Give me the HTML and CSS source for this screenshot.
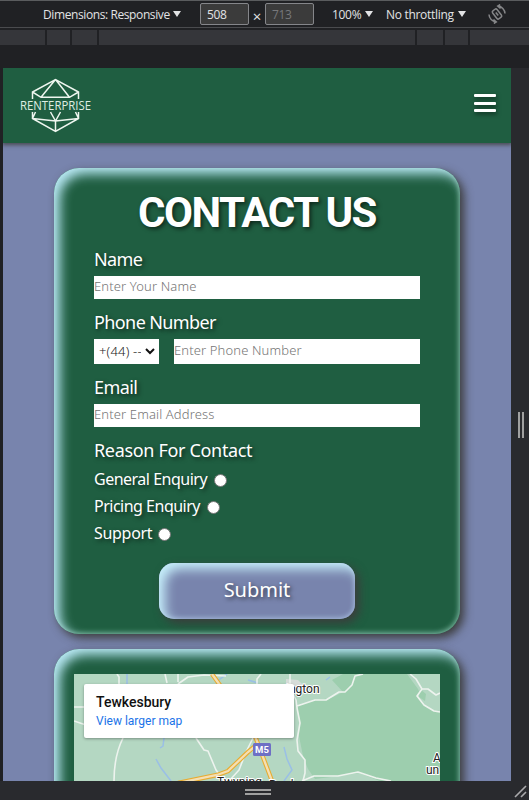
FILE: index.html
```
<!DOCTYPE html>
<html lang="en">
<head>
<meta charset="utf-8">
<title>Contact Us</title>
<link rel="stylesheet" href="styles.css">
</head>
<body>
<div class="toolbar">
  <span class="tool dims">Dimensions: Responsive</span><i class="caret"></i>
  <span class="size">508</span><span class="times">×</span><span class="size muted">713</span>
  <span class="tool zoom">100%</span><i class="caret"></i>
  <span class="tool throttle">No throttling</span><i class="caret"></i>
  <svg class="rotate" width="20" height="20" viewBox="0 0 20 20" fill="none" stroke="#858688" stroke-width="1.5"><g transform="rotate(-38 10 10)"><rect x="7.200" y="5" width="5.600" height="10" rx="1.500"/><path d="M10 8v4"/></g><path d="M2 10.500A8 8 0 0 0 9 18M6.500 15.500l2.800 2.500-2.500 1.500M18 9.500A8 8 0 0 0 11 2M13.500 4.500L10.700 2l2.500-1.500"/></svg>
</div>
<div class="ruler"><i></i><i></i><i></i><i></i><i></i><i></i><i></i></div>
<div class="stage">
  <main class="page">
    <header class="header">
      <svg class="logo" width="74" height="58" viewBox="19 77 74 58" fill="none" stroke="#eef6ef" stroke-width="1.500"><path d="M32.500 99V92L55.500 79.500 78.500 92V99M32.500 92L41 97.300H69.500L78.500 92M55.500 79.500L41 97.300M55.500 79.500L69.500 97.300M32.500 112V118.500L55.500 131.500 78.500 118.500V112M32.500 118.500L55.500 121 78.500 118.500M55.500 121V131.500M50.500 112L55.500 121 60.500 112M35.500 112L32.500 118.500M75.500 112L78.500 118.500"/><text class="logo-text" x="20" y="109.800" textLength="71" lengthAdjust="spacingAndGlyphs">RENTERPRISE</text></svg>
      <div class="burger"><i></i><i></i><i></i></div>
    </header>
    <form class="card contact">
      <h1>CONTACT US</h1>
      <label class="name">Name</label>
      <input class="field f-name" type="text" placeholder="Enter Your Name">
      <label class="phone">Phone Number</label>
      <div class="phone-row">
        <div class="select"><span>+(44) --</span><svg width="10" height="7" viewBox="0 0 10 7" fill="none" stroke="#111" stroke-width="2"><path d="M1 1l4 4 4-4"/></svg></div>
        <input class="field f-phone" type="text" placeholder="Enter Phone Number">
      </div>
      <label class="email">Email</label>
      <input class="field f-email" type="text" placeholder="Enter Email Address">
      <label class="reason">Reason For Contact</label>
      <div class="options">
        <div class="option"><span class="o1">General Enquiry</span><i></i></div>
        <div class="option"><span class="o2">Pricing Enquiry</span><i></i></div>
        <div class="option"><span class="o3">Support</span><i></i></div>
      </div>
      <button class="submit" type="button">Submit</button>
    </form>
    <section class="card location">
      <div class="map">
        <svg width="366" height="107" viewBox="0 0 366 107" fill="none">
          <rect width="366" height="107" fill="#b4d7c2"/>
          <path fill="#9dceae" d="M223 32L242 26 257 24 269 18 258 6 269 0H333L344 15 349 26 366 38V107H306L285 99 265 102 241 105 234 95 229 82 225 62 226 47z"/>
          <path fill="#b4d7c2" d="M336 0l6 5 6 10-5 7 7 9 10 6 6 1V0z"/>
          <path fill="#d6dcd9" d="M212 5l12 1 6 6-3 7h-15z"/>
          <path fill="#9dceae" d="M346 15l6 5-1 7-6-4z"/>
          <path stroke="#9abfe6" stroke-width="1.500" d="M53 0v10M153 0l-11 8M174 6l10 3M90 64l-1 8-3 2M82 85l5 9 10 13M210 73l3 12 5 11-8 11M252 6l4-3"/>
          <g stroke="#edf3ee" stroke-width="1.600" stroke-linejoin="round"><path d="M43 0l2 3v9M91 0l2 9M104 10l10-7 16-2 22 1M104 0v8M187 0l-4 5v6M0 33h12M0 47l12 4M49 64q-9 18-9 43M122 64l8 12 4 1 8 19 8 11M179 64l-7 14-7 18-10 11M216 0v14l6 12 1 8 3 15-3 17 1 11 7 9v13l-2 8M223 32l18-6h11l13-8h6l7-7 3-9 8-2M336 0l6 5 6 10-5 7 7 9 10 6 6 1M348 15l6 0 8 6 4-2M228 107l12-5h24l20-4 18 6 15 3"/></g>
          <g stroke="#e7ac32" stroke-width="4.500"><path d="M138 0l15 21M104 109l39-8 11-4 20-19 11-9M181 62l17 45"/></g>
          <g stroke="#f4dfb3" stroke-width="2.300"><path d="M138 0l15 21M104 109l39-8 11-4 20-19 11-9M181 62l17 45"/></g>
          <rect x="179" y="69" width="18" height="13" rx="1.500" fill="#6e70c5"/>
          <text class="road" x="181" y="78.500" textLength="14">M5</text>
          <g class="places"><text x="212" y="19">ington</text><text x="143" y="112" textLength="45">Twyning</text><text x="359" y="88">A</text><text x="352" y="100">un</text><text x="195" y="115">Bredon</text></g>
        </svg>
        <div class="place"><b>Tewkesbury</b><a>View larger map</a></div>
      </div>
    </section>
  </main>
  <div class="side"><div class="grip"></div></div>
</div>
<div class="bottom"><div class="grip flat"></div><svg class="corner" width="14" height="14" viewBox="0 0 14 14" stroke="#a9a9ab" stroke-width="1.600"><path d="M1 12L12 1M7 12l5-5"/></svg></div>
</body>
</html>
```
FILE: styles.css
```
* { box-sizing: border-box; }
body { margin: 0; width: 529px; height: 800px; overflow: hidden; background: #202124; font-family: "Noto Sans", sans-serif; }
.toolbar { height: 28px; border-top: 1px solid #5a5c5e; border-bottom: 1px solid #4a4b4e; display: flex; align-items: center; padding-left: 43px; color: #e2e3e5; font: 12px "Open Sans", sans-serif; white-space: nowrap; }
.tool { line-height: 18px; padding-top: 2px; }
.dims { width: 127px; letter-spacing: -0.4px; }
.caret { border: 4px solid transparent; border-top: 6px solid #e2e3e5; border-bottom: 0; margin-left: 3px; }
.size { width: 49px; height: 22px; margin-left: 19px; border: 1px solid #85868a; border-radius: 2px; background: #3b3b3b; line-height: 21px; padding-left: 6px; letter-spacing: -0.4px; }
.times { width: 16px; text-align: center; font-size: 15px; padding-top: 3px; }
.times + .size { margin-left: 0; }
.muted { color: #77787b; }
.zoom { width: 30px; margin-left: 18px; letter-spacing: -0.3px; }
.throttle { width: 69px; margin-left: 13px; letter-spacing: -0.3px; }
.rotate { margin-left: 21px; }
.ruler { height: 18px; padding: 2px 0 1px; display: grid; grid-template-columns: 45px 23px 25px 316px 26px 23px 59px; gap: 2px; }
.ruler i { background: #35363a; }
.stage { margin-top: 22px; padding-left: 3px; height: 713px; display: grid; grid-template-columns: 508px 18px; }
.page { background: #7884ad; height: 713px; overflow: hidden; }
.header { height: 75px; background: #1f5e41; box-shadow: 0 1px 4px 1px #484a50; display: flex; justify-content: space-between; padding: 9px 15px 0 16px; }
.logo { overflow: visible; }
.logo-text { font: 400 12.5px "Open Sans", sans-serif; fill: #dfeee3; stroke: none; }
.burger { width: 22px; height: 18px; margin-top: 17px; display: flex; flex-direction: column; justify-content: space-between; filter: drop-shadow(1px 2px 2px #0008); }
.burger i { height: 3px; border-radius: 1px; background: #fff; }
.card { width: 406px; margin-left: 51px; border-radius: 25px; background: #1f5e41; box-shadow: 4px 4px 10px #3c3c3c, inset 6px 6px 12px #b8e8f4, inset -1px -1px 5px #6fac91; }
.contact { height: 466px; margin-top: 25px; padding: 20px 40px 15px; display: flex; flex-direction: column; color: #fff; }
h1 { margin: 0 0 12px; height: 48px; font: 700 42px/49px Roboto, sans-serif; letter-spacing: -1.5px; text-align: center; text-shadow: 2px 2px 4px #0009; white-space: nowrap; }
label { height: 24px; line-height: 22px; font-size: 18px; letter-spacing: -0.6px; margin-bottom: 4px; text-shadow: 2px 2px 4px #0009; white-space: nowrap; }
.reason { letter-spacing: -0.33px; }
.field { display: block; border: 0; border-radius: 0; height: 23px; flex: none; width: 326px; margin: 0 0 12px; padding: 0 0 3px 0; font: 300 13px "Noto Sans", sans-serif; letter-spacing: 0.13px; background: #fff; }
.field::placeholder { color: #757575; opacity: 1; }
.phone-row { display: flex; justify-content: space-between; height: 37px; }
.f-phone { width: 246px; height: 25px; }
.select { width: 65px; height: 25px; background: #fff; color: #222; font: 300 13px/22px "Noto Sans", sans-serif; display: flex; align-items: center; padding: 0 4px 0 5px; }
.select span { width: 42px; height: 24px; letter-spacing: 0.2px; margin-right: 4px; overflow: hidden; white-space: nowrap; }
.options { margin-top: -1px; }
.option { height: 27px; display: flex; align-items: center; font-size: 16px; letter-spacing: -0.5px; text-shadow: 2px 2px 4px #0009; white-space: nowrap; }
.option span { padding-bottom: 2px; }
.option i { width: 13px; height: 13px; border: 1px solid #767676; border-radius: 50%; background: #fff; margin: 2px 0 0 5px; }
.o1 { width: 115px; } .o2 { width: 108px; } .o3 { width: 59px; letter-spacing: -0.3px; }
.submit { flex: none; width: 196px; height: 56px; margin: 16px 0 0 65px; padding: 0 0 3px; border: 0; border-radius: 15px; background: #7884ad; color: #fff; font: 20px "Noto Sans", sans-serif; text-shadow: 2px 2px 4px #0009; box-shadow: 4px 4px 10px #3c3c3c, inset 6px 6px 12px #c6effb, inset -1px -1px 4px #9aabd0; }
.location { height: 300px; margin-top: 15px; padding: 25px 20px; }
.map { position: relative; width: 366px; height: 250px; overflow: hidden; background: #b4d7c2; font-family: Roboto, sans-serif; }
.road { font: 700 9.5px Roboto, sans-serif; fill: #fff; }
.places { font: 12px Roboto, sans-serif; fill: #222; stroke: #fff; stroke-width: 2px; paint-order: stroke; }
.place { position: absolute; left: 10px; top: 10px; width: 210px; height: 54px; background: #fff; border-radius: 2px; box-shadow: 0 1px 3px #0005; padding: 9px 12px; display: flex; flex-direction: column; }
.place b { font: 500 14px/18px Roboto, sans-serif; color: #111; }
.place a { font: 12px/20px Roboto, sans-serif; color: #1a73e8; }
.side { background: #292a2e; display: flex; align-items: center; padding-left: 7px; }
.grip { width: 6px; height: 26px; border: solid #a0a0a0; border-width: 0 2px; }
.bottom { height: 19px; background: #292a2e; display: flex; align-items: center; justify-content: space-between; padding: 3px 1px 0 245px; }
.flat { width: 26px; height: 6px; border-width: 2px 0; }
```
